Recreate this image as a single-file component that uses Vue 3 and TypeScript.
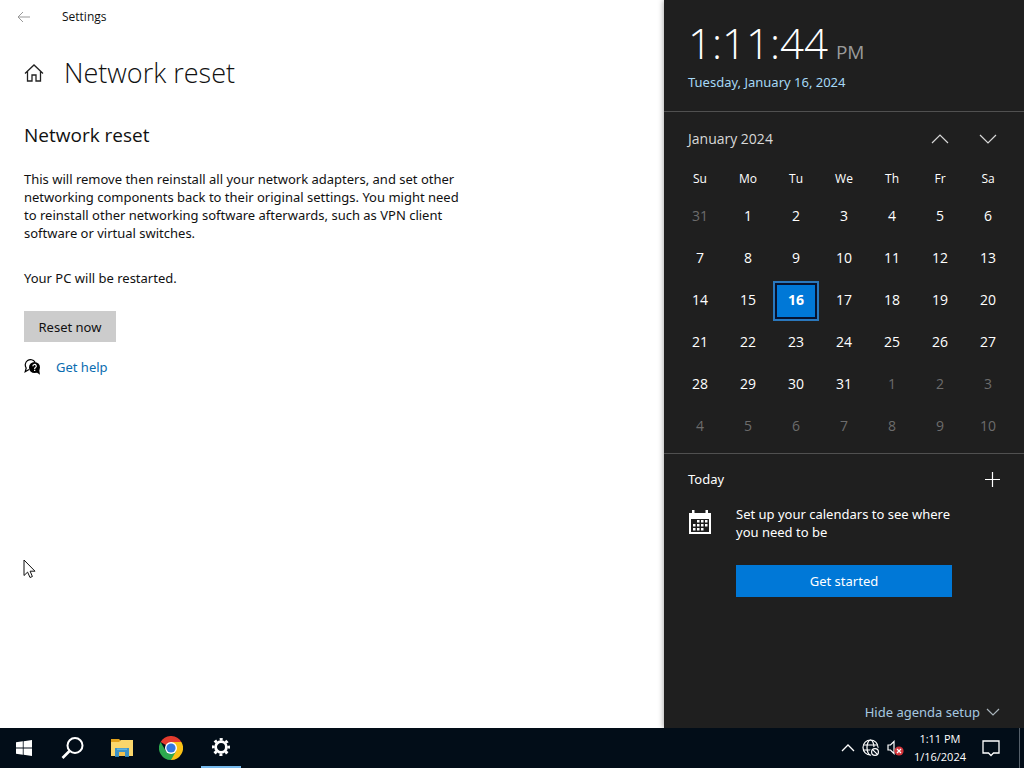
<script setup lang="ts">
interface Day {
  n: number
  out: boolean
  today: boolean
}

const weekdays: string[] = ['Su', 'Mo', 'Tu', 'We', 'Th', 'Fr', 'Sa']

const weeks: Day[][] = Array.from({ length: 6 }, (_, w) =>
  Array.from({ length: 7 }, (_, d) => {
    const i = w * 7 + d
    const n = i === 0 ? 31 : i > 31 ? i - 31 : i
    return { n, out: i === 0 || i > 31, today: i === 16 }
  }),
)
</script>

<template>
  <div class="desktop">
    <div class="workspace">
      <main class="settings">
        <header class="titlebar">
          <button class="plain back" aria-label="Back">
            <svg width="14" height="12" viewBox="0 0 14 12"><path d="M13 6H1M6 1L1 6l5 5" fill="none" stroke="#999" /></svg>
          </button>
          <span class="app-name">Settings</span>
        </header>
        <div class="page-head">
          <button class="plain home" aria-label="Home">
            <svg width="20" height="18" viewBox="0 0 20 18">
              <path d="M1 9.500L10 1l9 8.500M3.500 7.500V17H8v-6h4v6h4.500V7.500" fill="none" stroke="#222" stroke-width="1.300" />
            </svg>
          </button>
          <h1>Network reset</h1>
        </div>
        <section class="content">
          <h2>Network reset</h2>
          <p class="description">
            This will remove then reinstall all your network adapters, and set other<br />
            networking components back to their original settings. You might need<br />
            to reinstall other networking software afterwards, such as VPN client<br />
            software or virtual switches.
          </p>
          <p class="notice">Your PC will be restarted.</p>
          <button class="reset">Reset now</button>
          <div class="help">
            <svg width="17" height="16" viewBox="0 0 17 16">
              <path d="M5 10.500l-3.800 2.300 1-3.800A4.900 4.900 0 1 1 11 3" fill="none" stroke="#000" stroke-width="1.200" />
              <circle cx="10.500" cy="8.500" r="5.500" />
              <path d="M12 13l4 2.700-.8-4.700z" />
              <path d="M8.900 7.300a1.700 1.700 0 1 1 2.600 1.300c-.7.400-.9.700-.9 1.400" fill="none" stroke="#fff" stroke-width="1.200" />
              <rect x="10" y="10.700" width="1.300" height="1.300" fill="#fff" />
            </svg>
            <a href="#">Get help</a>
          </div>
        </section>
        <svg class="pointer" width="13" height="20" viewBox="0 0 13 20">
          <path d="M1 1v15.500l3.600-3.400 2.400 5.400 2.400-1-2.300-5.300H12z" fill="#fff" stroke="#111" />
        </svg>
      </main>

      <aside class="flyout">
        <section class="clock">
          <div class="time"><span class="digits">1:11:44</span><span class="meridiem">PM</span></div>
          <a class="date" href="#">Tuesday, January 16, 2024</a>
        </section>
        <section class="calendar">
          <div class="month-bar">
            <button class="plain month">January 2024</button>
            <button class="plain arrow" aria-label="Previous month">
              <svg width="18" height="10" viewBox="0 0 18 10"><path d="M1 9l8-8 8 8" fill="none" stroke="#d8d8d8" stroke-width="1.200" /></svg>
            </button>
            <button class="plain arrow" aria-label="Next month">
              <svg width="18" height="10" viewBox="0 0 18 10"><path d="M1 1l8 8 8-8" fill="none" stroke="#d8d8d8" stroke-width="1.200" /></svg>
            </button>
          </div>
          <table>
            <thead>
              <tr><th v-for="d in weekdays" :key="d" scope="col">{{ d }}</th></tr>
            </thead>
            <tbody>
              <tr v-for="(week, w) in weeks" :key="w">
                <td v-for="day in week" :key="day.n">
                  <button class="day" :class="{ out: day.out, today: day.today }">{{ day.n }}</button>
                </td>
              </tr>
            </tbody>
          </table>
        </section>
        <section class="agenda">
          <div class="agenda-head">
            <span>Today</span>
            <button class="plain" aria-label="New event">
              <svg width="15" height="15" viewBox="0 0 15 15"><path d="M7.500 0v15M0 7.500h15" stroke="#fff" stroke-width="1.200" /></svg>
            </button>
          </div>
          <div class="setup">
            <svg class="cal-icon" width="24" height="26" viewBox="0 0 24 26">
              <path d="M1 4h3V1h2.500v3h11V1H20v3h3v21H1z" fill="#fff" />
              <rect x="3" y="10" width="18" height="13" fill="#1f1f1f" />
              <path d="M9 11h2.500v2.500H9zM13 11h2.500v2.500H13zM17 11h2.500v2.500H17zM5 15h2.500v2.500H5zM9 15h2.500v2.500H9zM13 15h2.500v2.500H13zM17 15h2.500v2.500H17zM5 19h2.500v2.500H5zM9 19h2.500v2.500H9zM13 19h2.500v2.500H13z" fill="#fff" />
            </svg>
            <div class="setup-body">
              <p>Set up your calendars to see where<br />you need to be</p>
              <button class="start-cal">Get started</button>
            </div>
          </div>
          <button class="plain hide">
            Hide agenda setup
            <svg width="14" height="8" viewBox="0 0 14 8"><path d="M1 1l6 6 6-6" fill="none" stroke="#a9b4bb" stroke-width="1.200" /></svg>
          </button>
        </section>
      </aside>
    </div>

    <footer class="taskbar">
      <nav class="apps">
        <button class="plain" aria-label="Start">
          <svg width="16" height="16" viewBox="0 0 16 16" fill="#fff"><path d="M0 2.300L6.800 1.300V7.600H0zM7.600 1.200L16 0v7.600H7.600zM0 8.400h6.800v6.300L0 13.700zM7.600 8.400H16V16l-8.400-1.200z" /></svg>
        </button>
        <button class="plain" aria-label="Search">
          <svg width="24" height="24" viewBox="0 0 24 24" fill="none" stroke="#fff"><circle cx="14" cy="9.500" r="7.500" stroke-width="2" /><path d="M8.500 15l-7 7" stroke-width="2.600" /></svg>
        </button>
        <button class="plain" aria-label="File Explorer">
          <svg width="22" height="20" viewBox="0 0 22 20">
            <path d="M0 1h8l2 2h11v4H0z" fill="#e3a21c" />
            <path d="M0 4h8l2-2h12v16H0z" fill="#fbd66b" />
            <path d="M4 18v-8h14v8h-4v-4H8v4z" fill="#3c92c7" />
            <path d="M6 10.500h10V12H6z" fill="#62b3dd" />
            <path d="M8 14h6v4H8z" fill="#f2c14e" />
            <path d="M4 18h4v1H4zM14 18h4v1h-4z" fill="#2c7bad" />
          </svg>
        </button>
        <button class="plain" aria-label="Google Chrome">
          <svg width="24" height="24" viewBox="0 0 24 24">
            <path d="M12 12L1.600 6A12 12 0 0 1 22.400 6z" fill="#e33b2e" />
            <path d="M12 12V6h10.400A12 12 0 0 1 12 24z" fill="#fbc116" />
            <path d="M12 24A12 12 0 0 1 1.600 6L6.800 15 12 18l5.200-3z" fill="#2da94f" />
            <circle cx="12" cy="12" r="6" fill="#fff" />
            <circle cx="12" cy="12" r="4.600" fill="#3478e0" />
          </svg>
        </button>
        <button class="plain active" aria-label="Settings">
          <svg width="20" height="20" viewBox="0 0 20 20" fill="none" stroke="#fff">
            <circle cx="10" cy="10" r="5.400" stroke-width="2.800" />
            <circle cx="10" cy="10" r="7.700" stroke-width="2.600" stroke-dasharray="3.020 3.020" stroke-dashoffset="1.510" />
          </svg>
        </button>
      </nav>
      <div class="tray">
        <button class="plain" aria-label="Show hidden icons">
          <svg width="14" height="8" viewBox="0 0 14 8"><path d="M1 7l6-6 6 6" fill="none" stroke="#fff" stroke-width="1.300" /></svg>
        </button>
        <button class="plain" aria-label="Network">
          <svg width="18" height="18" viewBox="0 0 18 18" fill="none" stroke="#fff" stroke-width="1.200">
            <circle cx="8.500" cy="8.500" r="7.500" />
            <ellipse cx="8.500" cy="8.500" rx="3.500" ry="7.500" />
            <path d="M1.500 6h14M1.500 11h14" />
            <circle cx="13" cy="13" r="4.600" fill="#020d18" stroke="#020d18" />
            <circle cx="13" cy="13" r="3.400" />
            <path d="M10.600 10.600l4.800 4.800" />
          </svg>
        </button>
        <button class="plain" aria-label="Volume">
          <svg width="17" height="16" viewBox="0 0 17 16">
            <path d="M1 5h2.500L7 1.500v12L3.500 10H1z" fill="none" stroke="#fff" stroke-width="1.200" />
            <circle cx="12" cy="11" r="4.600" fill="#d3343a" />
            <path d="M10 9l4 4M14 9l-4 4" stroke="#fff" stroke-width="1.200" />
          </svg>
        </button>
        <button class="plain tray-clock">1:11 PM<br />1/16/2024</button>
        <button class="plain" aria-label="Notifications">
          <svg width="18" height="17" viewBox="0 0 18 17"><path d="M1 1h16v12h-5.500L9 15.500 6.500 13H1z" fill="none" stroke="#fff" stroke-width="1.300" /></svg>
        </button>
        <span class="peek"></span>
      </div>
    </footer>
  </div>
</template>

<style>
html,
body {
  margin: 0;
}
</style>

<style scoped>
.desktop {
  display: flex;
  flex-direction: column;
  height: 100vh;
  overflow: hidden;
  font: 13px/18px 'Noto Sans', 'Open Sans', sans-serif;
  color: #111;
  background: #fff;
}

.desktop * {
  box-sizing: border-box;
}

button {
  font: inherit;
  color: inherit;
  border: 0;
  padding: 0;
}

.plain {
  display: flex;
  align-items: center;
  justify-content: center;
  background: none;
}

h1,
h2,
p {
  margin: 0;
  font-weight: 400;
}

a {
  text-decoration: none;
}

svg {
  display: block;
  flex: none;
}

.workspace {
  display: flex;
  flex: 1;
  min-height: 0;
}

.settings {
  position: relative;
  flex: 1;
  min-width: 0;
}

.pointer {
  position: absolute;
  left: 23px;
  top: 559px;
}

.titlebar {
  display: flex;
  align-items: center;
  height: 33px;
  font: 12px/18px 'Open Sans', sans-serif;
}

.back {
  width: 48px;
  height: 32px;
}

.app-name {
  margin-left: 14px;
}

.page-head {
  display: flex;
  align-items: center;
  height: 48px;
  margin-top: 16px;
  padding-left: 24px;
}

.home {
  width: 20px;
  margin-right: 20px;
}

h1 {
  font: 300 27px/48px 'Open Sans', sans-serif;
}

.content {
  padding: 23px 24px 0;
}

h2 {
  font: 400 19px/30px 'Open Sans', sans-serif;
}

.description {
  margin-top: 20px;
}

.notice {
  margin-top: 27px;
}

.reset {
  margin-top: 24px;
  width: 92px;
  height: 31px;
  background: #ccc;
}

.help {
  display: flex;
  align-items: center;
  gap: 15px;
  margin-top: 16px;
}

.help a {
  color: #0a6cb0;
}

.flyout {
  display: flex;
  flex-direction: column;
  width: 360px;
  background: #1f1f1f;
  color: #fff;
  box-shadow: 0 0 6px rgba(0, 0, 0, 0.4);
}

.clock {
  height: 112px;
  padding: 15px 24px 0;
  border-bottom: 1px solid #505050;
}

.time {
  display: flex;
  align-items: baseline;
  height: 58px;
  font-family: 'Open Sans', sans-serif;
  line-height: 56px;
}

.digits {
  font-size: 42px;
  font-weight: 300;
}

.meridiem {
  margin-left: 8px;
  font-size: 19px;
  color: #9a9a9a;
}

.date {
  color: #a6d8f5;
}

.calendar {
  height: 342px;
  padding: 0 12px;
  border-bottom: 1px solid #505050;
}

.month-bar {
  display: flex;
  align-items: center;
  height: 54px;
}

.month {
  margin: 0 auto 0 12px;
  font: 14px/18px 'Open Sans', sans-serif;
  color: #d8d8d8;
}

.arrow {
  width: 48px;
  height: 40px;
}

table {
  width: 100%;
  table-layout: fixed;
  border-collapse: collapse;
}

th {
  height: 29px;
  padding: 0 0 4px;
  font: 12px/18px 'Open Sans', sans-serif;
}

td {
  height: 42px;
  padding: 2px 1px 0;
}

.day {
  display: block;
  width: 100%;
  height: 40px;
  padding-bottom: 2px;
  background: none;
  font: 14px/18px 'Open Sans', sans-serif;
}

.out {
  color: #6c6c6c;
}

.today {
  border: 2px solid #2a78bd;
  background: #0078d7;
  box-shadow: inset 0 0 0 2px #06122e;
  font-weight: 700;
}

.agenda {
  display: flex;
  flex-direction: column;
  flex: 1;
  padding: 16px 24px 7px;
}

.agenda-head {
  display: flex;
  justify-content: space-between;
  align-items: center;
}

.setup {
  display: flex;
  gap: 24px;
  margin-top: 17px;
}

.cal-icon {
  margin-top: 4px;
}

.setup-body {
  flex: 1;
  padding-right: 48px;
}

.start-cal {
  width: 100%;
  height: 32px;
  margin-top: 24px;
  background: #0078d7;
}

.hide {
  gap: 6px;
  margin: auto 0 0 auto;
  color: #a6c8e0;
}

.taskbar {
  display: flex;
  justify-content: space-between;
  height: 40px;
  background: #020d18;
  color: #fff;
}

.apps {
  display: flex;
  gap: 1px;
}

.apps button {
  width: 48px;
  height: 40px;
}

.apps .active {
  width: 40px;
  margin-left: 5px;
  border-bottom: 2px solid #76b9ed;
}

.tray {
  display: flex;
  gap: 7px;
}

.tray-clock {
  margin: 0 9px 0 3px;
  font: 11px/18px 'Open Sans', sans-serif;
}

.peek {
  width: 5px;
  margin-left: 12px;
  border-left: 1px solid #56606a;
}
</style>
